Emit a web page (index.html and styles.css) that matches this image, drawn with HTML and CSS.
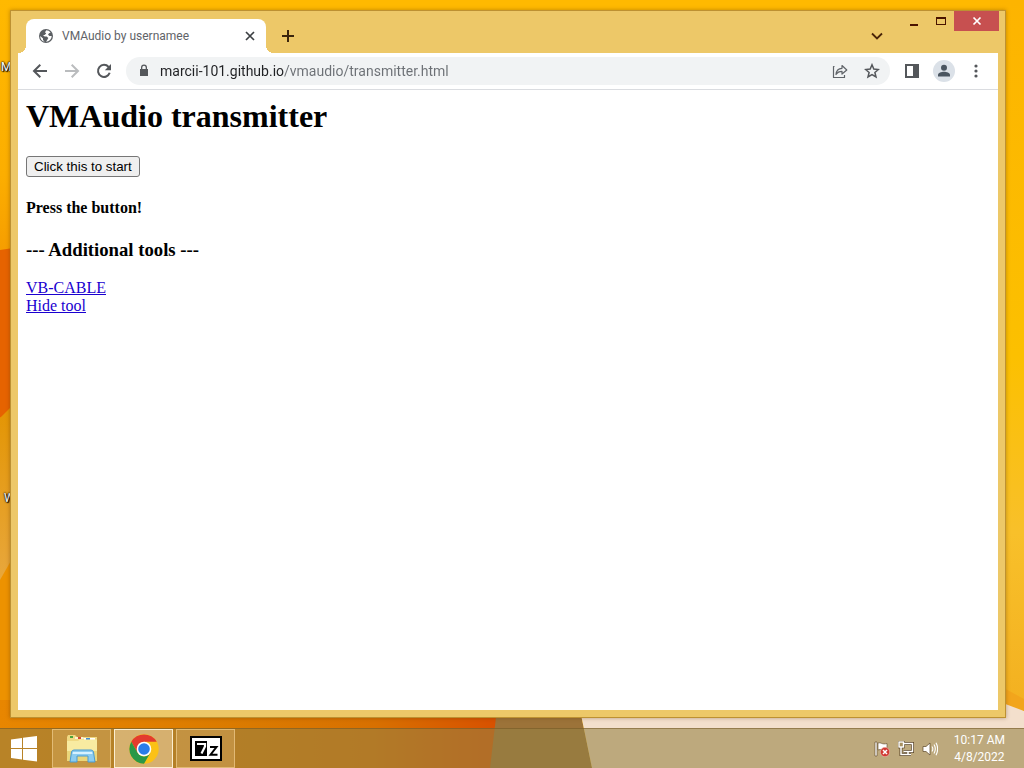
FILE: index.html
```
<!DOCTYPE html>
<html lang="en">
<head>
    <meta charset="UTF-8">
    <meta name="viewport" content="width=device-width, initial-scale=1.0">
    <title>VMAudio by usernamee</title>
    <link rel="stylesheet" href="styles.css">
</head>
<body>
    <div class="desktop">
        <svg class="wallpaper" viewBox="0 0 1024 768" preserveAspectRatio="none" aria-hidden="true">
            <defs>
                <linearGradient id="leftSide" x1="0" y1="0" x2="0" y2="1">
                    <stop offset="0" stop-color="#ffb900"/>
                    <stop offset="0.7" stop-color="#fcae00"/>
                    <stop offset="1" stop-color="#f69e00"/>
                </linearGradient>
                <linearGradient id="rightSide" x1="0" y1="0" x2="0" y2="1">
                    <stop offset="0" stop-color="#fdb400"/>
                    <stop offset="0.5" stop-color="#fcc000"/>
                    <stop offset="0.75" stop-color="#f8c02a"/>
                    <stop offset="1" stop-color="#f3b020"/>
                </linearGradient>
                <linearGradient id="pale" x1="0" y1="0" x2="0" y2="1">
                    <stop offset="0" stop-color="#e39400"/>
                    <stop offset="1" stop-color="#e8a840"/>
                </linearGradient>
                <linearGradient id="bottom" x1="0" y1="0" x2="1" y2="0">
                    <stop offset="0" stop-color="#e88600"/>
                    <stop offset="0.5" stop-color="#da7a00"/>
                    <stop offset="0.75" stop-color="#d87000"/>
                    <stop offset="1" stop-color="#d85000"/>
                </linearGradient>
            </defs>
            <rect width="1024" height="768" fill="#ffb900"/>
            <rect width="20" height="250" fill="url(#leftSide)"/>
            <rect x="990" width="34" height="710" fill="url(#rightSide)"/>
            <path d="M0 250L20 247V405L0 418Z" fill="#e66300"/>
            <path d="M0 418L20 398V560L0 590Z" fill="url(#pale)"/>
            <path d="M0 580L20 545V730H0Z" fill="#ed9200"/>
            <rect y="700" width="500" height="68" fill="url(#bottom)"/>
            <path d="M498 700H578L592 768H490Z" fill="#9c7339"/>
            <path d="M578 700H1010L1024 711V768H592Z" fill="#f3dfcc"/>
            <path d="M1000 686L1024 699V711L1000 702Z" fill="#f2a51c"/>
        </svg>
        <span class="shortcut shortcut-top">M</span>
        <span class="shortcut shortcut-bottom">W</span>

        <main class="window">
            <div class="titlebar">
                <div class="tab">
                    <svg class="icon-16" viewBox="0 0 16 16" aria-hidden="true">
                        <circle cx="8" cy="8" r="7" fill="#5a5e62"/>
                        <path d="M8.3 2.3L7 4.2 8.2 5.4 6.6 6.9H5L6.6 8.6 8.7 8.5 10.3 10 9.2 12 8 13.8A5.8 5.8 0 0 0 13.7 8L11.5 8 10 6.8 11 5.2 12.6 4.4A5.8 5.8 0 0 0 8.3 2.3ZM2.2 8L5 10.5V12L6.7 13.7A5.8 5.8 0 0 1 2.2 8Z" fill="#fff"/>
                    </svg>
                    <span class="tab-title">VMAudio by usernamee</span>
                    <button class="tab-close" type="button" aria-label="Close tab">
                        <svg class="icon-16" viewBox="0 0 16 16"><path d="M4 4L12 12M12 4L4 12" stroke="#3c4043" stroke-width="1.7"/></svg>
                    </button>
                </div>
                <button class="new-tab" type="button" aria-label="New tab">
                    <svg class="icon-16" viewBox="0 0 16 16"><path d="M8 2V14M2 8H14" stroke="#3b250c" stroke-width="2"/></svg>
                </button>
                <button class="tab-search" type="button" aria-label="Search tabs">
                    <svg class="icon-16" viewBox="0 0 16 16"><path d="M3 5.5L8 10.5L13 5.5" fill="none" stroke="#4a2408" stroke-width="1.8"/></svg>
                </button>
                <div class="caption-buttons">
                    <button class="caption" type="button" aria-label="Minimize">
                        <svg class="icon-10" viewBox="0 0 10 10"><path d="M1 8H9V10H1Z" fill="#4a1400"/></svg>
                    </button>
                    <button class="caption" type="button" aria-label="Maximize">
                        <svg class="icon-10" viewBox="0 0 10 10"><path d="M0 1H10V9H0ZM1 3V8H9V3Z" fill="#4a1400" fill-rule="evenodd"/></svg>
                    </button>
                    <button class="caption caption-close" type="button" aria-label="Close">
                        <svg class="icon-10" viewBox="0 0 10 10"><path d="M1.5 1.5L8.5 8.5M8.5 1.5L1.5 8.5" stroke="#fff" stroke-width="1.7"/></svg>
                    </button>
                </div>
            </div>

            <div class="toolbar">
                <button class="tool" type="button" aria-label="Back">
                    <svg class="icon-16" viewBox="0 0 16 16"><path d="M15 8H2.5M8.3 1.8L2 8L8.3 14.2" fill="none" stroke="#54575b" stroke-width="2"/></svg>
                </button>
                <button class="tool" type="button" aria-label="Forward">
                    <svg class="icon-16" viewBox="0 0 16 16"><path d="M1 8H13.5M7.7 1.8L14 8L7.7 14.2" fill="none" stroke="#babcbe" stroke-width="2"/></svg>
                </button>
                <button class="tool" type="button" aria-label="Reload">
                    <svg class="icon-16" viewBox="0 0 16 16"><path d="M13.7 9.8A6 6 0 1 1 12.6 4" fill="none" stroke="#54575b" stroke-width="2"/><path d="M15 1V7.2H8.8Z" fill="#54575b"/></svg>
                </button>
                <div class="address">
                    <svg class="icon-16" viewBox="0 0 16 16" aria-hidden="true"><path d="M4 6H5V4.5A3 3 0 0 1 11 4.5V6H12V13H4ZM6.3 6H9.7V4.5A1.7 1.7 0 0 0 6.3 4.5Z" fill="#54575b" fill-rule="evenodd"/></svg>
                    <input class="url" type="text" aria-label="Address" value="marcii-101.github.io/vmaudio/transmitter.html">
                    <button class="tool" type="button" aria-label="Share">
                        <svg class="icon-16" viewBox="0 0 16 16"><path d="M2.5 3.5H1.5V14.5H12.5V12M4 11.5C4.3 7.5 6.5 5.5 10 5.3V2.5L14.8 7L10 11V8.3C7.2 8.3 5.4 9.2 4 11.5Z" fill="none" stroke="#5f6368" stroke-width="1.2" stroke-linejoin="round"/></svg>
                    </button>
                    <button class="tool" type="button" aria-label="Bookmark">
                        <svg class="icon-16" viewBox="0 0 16 16"><path d="M8 1.8L9.8 6.1L14.4 6.5L10.9 9.5L12 14L8 11.6L4 14L5.1 9.5L1.6 6.5L6.2 6.1Z" fill="none" stroke="#54575b" stroke-width="1.5"/></svg>
                    </button>
                </div>
                <button class="tool" type="button" aria-label="Side panel">
                    <svg class="icon-16" viewBox="0 0 16 16"><path d="M1 1H15V15H1ZM3 3V13H9V3Z" fill="#54575b" fill-rule="evenodd"/></svg>
                </button>
                <button class="tool profile" type="button" aria-label="Profile">
                    <svg class="icon-16" viewBox="0 0 16 16"><circle cx="8" cy="4.8" r="3" fill="#4a5560"/><path d="M2 13.5V12C2 9.6 5.5 8.8 8 8.8S14 9.6 14 12V13.5Z" fill="#4a5560"/></svg>
                </button>
                <button class="tool" type="button" aria-label="Menu">
                    <svg class="icon-16" viewBox="0 0 16 16" fill="#54575b"><circle cx="8" cy="3" r="1.6"/><circle cx="8" cy="8" r="1.6"/><circle cx="8" cy="13" r="1.6"/></svg>
                </button>
            </div>

            <section class="page">
                <h1>VMAudio transmitter</h1>
                <button type="button" class="start-btn">Click this to start</button>
                <h4>Press the button!</h4>
                <h3>--- Additional tools ---</h3>
                <a href="#">VB-CABLE</a><br>
                <a href="#">Hide tool</a>
            </section>
        </main>

        <footer class="taskbar">
            <button class="start" type="button" aria-label="Start">
                <svg class="icon-28" viewBox="0 0 28 28" fill="#fff"><path d="M1 4.5L12 3V13H1ZM13 2.8L27 1V13H13ZM1 14H12V24.5L1 23ZM13 14H27V26.5L13 24.7Z"/></svg>
            </button>
            <button class="task" type="button" aria-label="File Explorer">
                <svg class="icon-32" viewBox="0 0 32 32">
                    <path d="M1 4L2 2H9L11 4H31V28H1Z" fill="#f0d982"/>
                    <path d="M4 3H7V5H4Z" fill="#4ba33c"/>
                    <path d="M9 4H17L18 6H9Z" fill="#fbf3cf"/>
                    <path d="M12 4H15V6H12Z" fill="#d64b33"/>
                    <path d="M18 5H29V7H18Z" fill="#fff"/>
                    <path d="M20 5H24V7H20Z" fill="#438ed0"/>
                    <path d="M1 8H12L14 6.5H31V28H1Z" fill="#f8eba1"/>
                    <path d="M1 18H31V28H1Z" fill="#ead67b"/>
                    <path d="M4 29L5.5 19Q6 17 8 17H25Q27 17 27.5 19L29 29H22V23H11V29Z" fill="#8cccf0" stroke="#4a9bd0"/>
                    <path d="M7 19H26L26.5 21H6.5Z" fill="#d6f1ff"/>
                </svg>
            </button>
            <button class="task task-active" type="button" aria-label="Google Chrome">
                <svg class="icon-32" viewBox="0 0 32 32">
                    <circle cx="16" cy="16" r="14.7" fill="#fbc116"/>
                    <path d="M16 16L9.6 19.7 3.3 8.7A14.7 14.7 0 0 1 28.7 8.7H16Z" fill="#e33b2e"/>
                    <path d="M3.3 8.7L9.6 19.7A7.4 7.4 0 0 0 22.4 19.7L16 30.7A14.7 14.7 0 0 1 3.3 8.7Z" fill="#2a9847"/>
                    <circle cx="16" cy="16" r="7.3" fill="#fff"/>
                    <circle cx="16" cy="16" r="5.8" fill="#2b7de9"/>
                </svg>
            </button>
            <button class="task" type="button" aria-label="7-Zip">
                <svg class="icon-32" viewBox="0 0 32 32">
                    <path d="M0 3H32V28H0Z"/>
                    <path d="M2 5H30V26H2Z" fill="#fff"/>
                    <path d="M5 8H17V23H5Z"/>
                    <path d="M7 11H15V13.5L11.5 20.5" fill="none" stroke="#fff" stroke-width="2.2"/>
                    <path d="M20 14H26.5L20.5 21.7H27.5" fill="none" stroke="#000" stroke-width="2"/>
                </svg>
            </button>
            <div class="tray">
                <svg class="icon-16" viewBox="0 0 16 16" role="img" aria-label="Action Center">
                    <path d="M1 1H3V15H1ZM4 2C7 1 8 4 13 2.5V9C9 10 7 7.5 4 9Z" fill="#fff" stroke="#5a4527" stroke-width="0.6"/>
                    <circle cx="11" cy="11" r="4.7" fill="#d13a34" stroke="#f4cdc4" stroke-width="0.5"/>
                    <path d="M9 9L13 13M13 9L9 13" stroke="#fff" stroke-width="1.5"/>
                </svg>
                <svg class="icon-16" viewBox="0 0 16 16" role="img" aria-label="Network">
                    <path d="M6 2.5H14.5V10.5H5.5M10 11V13.5M3 6V13.5H13" fill="none" stroke="#5a4527" stroke-width="3"/>
                    <rect x="1" y="1" width="4.5" height="5" fill="#a79060" stroke="#5a4527" stroke-width="2.6"/>
                    <path d="M6 2.5H14.5V10.5H5.5M10 11V13.5M3 6V13.5H13" fill="none" stroke="#fff" stroke-width="1.5"/>
                    <rect x="1" y="1" width="4.5" height="5" fill="#a79060" stroke="#fff" stroke-width="1.4"/>
                </svg>
                <svg class="icon-16" viewBox="0 0 16 16" role="img" aria-label="Volume">
                    <path d="M1 5.5H4L8 2V14L4 10.5H1Z" fill="#fff" stroke="#5a4527" stroke-width="0.7"/>
                    <path d="M10 5.5Q11.7 8 10 10.5M12 3.5Q14.6 8 12 12.5M14 1.8Q17.3 8 14 14.2" fill="none" stroke="#fff" stroke-width="1.1"/>
                </svg>
            </div>
            <div class="clock"><time>10:17 AM</time><time>4/8/2022</time></div>
        </footer>
    </div>
</body>
</html>
```
FILE: styles.css
```
* {
    box-sizing: border-box;
}
body {
    margin: 0;
}
button {
    font-family: inherit;
}
svg {
    display: block;
    flex: none;
}
.icon-10 {
    width: 10px;
    height: 10px;
}
.icon-16 {
    width: 16px;
    height: 16px;
}
.icon-28 {
    width: 28px;
    height: 28px;
}
.icon-32 {
    width: 32px;
    height: 32px;
}
.desktop {
    position: relative;
    display: flex;
    flex-direction: column;
    min-height: 100vh;
    overflow: hidden;
    font-family: Roboto, "Open Sans", sans-serif;
    font-size: 12px;
}

/* Wallpaper and the shortcuts half hidden by the window */
.wallpaper {
    position: absolute;
    top: 0;
    left: 0;
    width: 100%;
    height: 100%;
}
.shortcut {
    position: absolute;
    color: white;
    text-shadow: 1px 1px 1px black, 0 0 2px black, 0 0 2px black;
}
.shortcut-top {
    top: 60px;
    left: 1px;
}
.shortcut-bottom {
    top: 491px;
    left: 4px;
}

/* Browser window */
.window {
    position: relative;
    flex: 1;
    display: flex;
    flex-direction: column;
    margin: 10px 18px 10px 10px;
    padding: 0 7px 7px;
    background-color: #edc868;
    border: 1px solid #bd9132;
    box-shadow: 0 0 4px rgba(90, 50, 0, 0.4);
}
.titlebar {
    display: flex;
    align-items: flex-end;
    height: 42px;
    padding-left: 8px;
}
.titlebar button,
.tool {
    display: flex;
    align-items: center;
    justify-content: center;
    padding: 0;
    border: none;
    background: none;
}
.tab {
    position: relative;
    display: flex;
    align-items: center;
    gap: 8px;
    width: 240px;
    height: 34px;
    padding: 0 8px 0 12px;
    background-color: white;
    border-radius: 8px 8px 0 0;
    color: #5f6368;
}
/* Curved feet of the tab */
.tab::before,
.tab::after {
    content: "";
    position: absolute;
    bottom: 0;
    width: 8px;
    height: 8px;
}
.tab::before {
    right: 100%;
    background: radial-gradient(circle at 0 0, transparent 8px, white 8px);
}
.tab::after {
    left: 100%;
    background: radial-gradient(circle at 100% 0, transparent 8px, white 8px);
}
.tab-title {
    flex: 1;
    white-space: nowrap;
}
.titlebar .new-tab,
.titlebar .tab-search {
    width: 28px;
    height: 34px;
    margin-left: 8px;
}
.titlebar .tab-search {
    margin-left: auto;
    margin-right: 9px;
}
.caption-buttons {
    display: flex;
    align-self: flex-start;
    margin-right: -1px;
}
.titlebar .caption {
    width: 27px;
    height: 20px;
}
.titlebar .caption-close {
    width: 45px;
    background-color: #c75050;
}
.toolbar {
    display: flex;
    align-items: center;
    gap: 4px;
    height: 37px;
    padding: 0 8px;
    background-color: white;
    border-bottom: 1px solid #dadce0;
}
.tool {
    width: 28px;
    height: 28px;
    border-radius: 50%;
}
.address {
    flex: 1;
    display: flex;
    align-items: center;
    gap: 4px;
    height: 28px;
    margin: 0 4px;
    padding: 0 4px 0 10px;
    background-color: #f1f3f4;
    border-radius: 14px;
}
.url {
    flex: 1;
    min-width: 0;
    height: 28px;
    padding: 0 4px;
    border: none;
    outline: none;
    font-family: inherit;
    font-size: 14px;
    /* host part dark, path part grey */
    background: linear-gradient(to right, #202124 128px, #6c7075 128px);
    -webkit-background-clip: text;
    background-clip: text;
    -webkit-text-fill-color: transparent;
}
.toolbar .profile {
    width: 22px;
    height: 22px;
    margin: 0 3px;
    background-color: #dbe1e8;
}

/* Page shown in the tab */
.page {
    flex: 1;
    padding: 8px;
    background-color: white;
    font-family: "Liberation Serif", "Times New Roman", serif;
    font-size: 16px;
    color: black;
}
.page h1 {
    margin: 0 0 21px;
    font-size: 32px;
    line-height: 37px;
}
.page h4 {
    margin: 22px 0;
}
.page h3 {
    margin: 22px 0 18px;
}
.page a {
    color: #1a00d0;
}
.start-btn {
    display: block;
    height: 21px;
    padding: 1px 7px;
    background-color: #efefef;
    border: 1px solid #767676;
    border-radius: 3px;
    font-family: "Liberation Sans", Arial, sans-serif;
    line-height: 16px;
}

/* Taskbar */
.taskbar {
    position: relative;
    display: flex;
    align-items: stretch;
    gap: 3px;
    height: 40px;
    padding-right: 19px;
    background-color: rgba(150, 130, 68, 0.58);
    border-top: 1px solid rgba(110, 80, 30, 0.5);
    color: white;
}
.start {
    display: flex;
    align-items: center;
    width: 49px;
    padding: 0 10px;
    border: none;
    background: none;
}
.task {
    display: flex;
    align-items: center;
    justify-content: center;
    width: 59px;
    padding: 0;
    background-color: rgba(255, 225, 170, 0.2);
    border: 1px solid rgba(255, 225, 170, 0.5);
}
.task-active {
    background-color: rgba(255, 235, 200, 0.45);
    border-color: rgba(255, 245, 220, 0.9);
}
.tray {
    display: flex;
    align-items: center;
    gap: 8px;
    margin-left: auto;
}
.clock {
    display: flex;
    flex-direction: column;
    justify-content: center;
    align-items: center;
    margin-left: 13px;
    line-height: 17px;
}
```
